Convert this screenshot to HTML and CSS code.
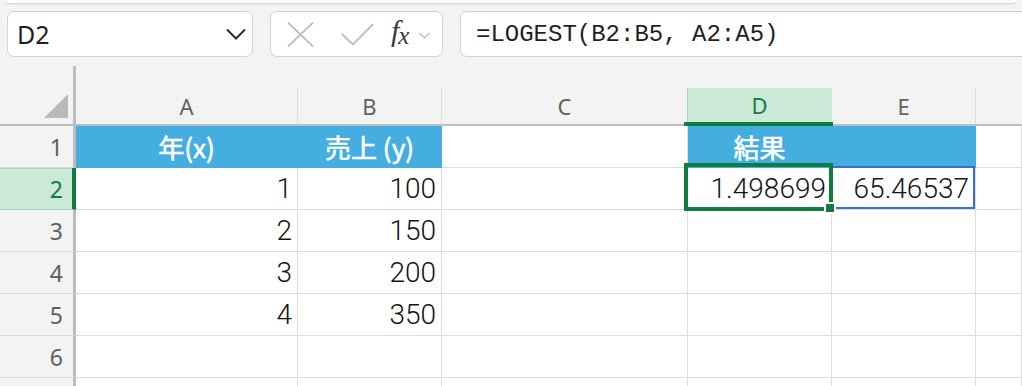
FILE: index.html
```html
<!DOCTYPE html>
<html lang="ja">

<head>
    <meta charset="UTF-8">
    <title>LOGEST</title>
    <link rel="stylesheet" href="styles.css">
</head>

<body>
    <div class="ribbon-edge"></div>

    <div class="formula-bar">
        <div class="name-box">
            <span class="name-text">D2</span>
            <svg class="name-caret" width="20" height="12" viewBox="0 0 20 12">
                <polyline points="1,1.5 10,10.5 19,1.5" fill="none" stroke="#2b2b2b" stroke-width="2" />
            </svg>
        </div>
        <div class="fx-box">
            <svg class="fx-cancel" width="27" height="25" viewBox="0 0 27 25">
                <path d="M1 0.5 L26 24.5 M26 0.5 L1 24.5" stroke="#bdbdbd" stroke-width="1.8" fill="none" />
            </svg>
            <svg class="fx-enter" width="33" height="23" viewBox="0 0 33 23">
                <polyline points="0.8,11 12,21.5 32.2,1" fill="none" stroke="#bdbdbd" stroke-width="1.8" />
            </svg>
            <span class="fx-label">f<span class="fx-x">x</span></span>
            <svg class="fx-caret" width="11" height="7" viewBox="0 0 11 7">
                <polyline points="0.5,1 5.5,6 10.5,1" fill="none" stroke="#b8b8b8" stroke-width="1.2" />
            </svg>
        </div>
        <div class="formula-input">=LOGEST(B2:B5, A2:A5)</div>
    </div>

    <div class="sheet">
        <!-- column headers -->
        <div class="corner">
            <svg width="24" height="24" viewBox="0 0 24 24">
                <polygon points="24,0 24,24 0,24" fill="#b9b9b9" />
            </svg>
        </div>
        <div class="ch">A</div>
        <div class="ch">B</div>
        <div class="ch">C</div>
        <div class="ch ch-active">D</div>
        <div class="ch">E</div>
        <div class="ch ch-last"></div>

        <!-- row 1 -->
        <div class="rh">1</div>
        <div class="c head">年(x)</div>
        <div class="c head">売上 (y)</div>
        <div class="c"></div>
        <div class="c head">結果</div>
        <div class="c head"></div>
        <div class="c"></div>

        <!-- row 2 -->
        <div class="rh rh-active">2</div>
        <div class="c num">1</div>
        <div class="c num">100</div>
        <div class="c"></div>
        <div class="c num selected">1.498699<span class="fill-handle"></span></div>
        <div class="c num spill">65.46537</div>
        <div class="c"></div>

        <!-- row 3 -->
        <div class="rh">3</div>
        <div class="c num">2</div>
        <div class="c num">150</div>
        <div class="c"></div>
        <div class="c"></div>
        <div class="c"></div>
        <div class="c"></div>

        <!-- row 4 -->
        <div class="rh">4</div>
        <div class="c num">3</div>
        <div class="c num">200</div>
        <div class="c"></div>
        <div class="c"></div>
        <div class="c"></div>
        <div class="c"></div>

        <!-- row 5 -->
        <div class="rh">5</div>
        <div class="c num">4</div>
        <div class="c num">350</div>
        <div class="c"></div>
        <div class="c"></div>
        <div class="c"></div>
        <div class="c"></div>

        <!-- row 6 -->
        <div class="rh">6</div>
        <div class="c"></div>
        <div class="c"></div>
        <div class="c"></div>
        <div class="c"></div>
        <div class="c"></div>
        <div class="c"></div>

        <!-- row 7, only its top edge is on screen -->
        <div class="rh"></div>
        <div class="c"></div>
        <div class="c"></div>
        <div class="c"></div>
        <div class="c"></div>
        <div class="c"></div>
        <div class="c"></div>
    </div>
</body>

</html>
```

FILE: styles.css
```css
body {
    margin: 0;
    background-color: #f3f3f3;
    font-family: "Noto Sans", "Noto Sans CJK JP", sans-serif;
    overflow: hidden;
}

.ribbon-edge {
    height: 3px;
    margin: 0 6px;
    background-color: #fff;
    border-radius: 0 0 8px 8px;
    box-shadow: 0 1px 2px rgba(0, 0, 0, 0.15);
}

/* formula bar */

.formula-bar {
    display: flex;
    gap: 17px;
    padding: 8px 0 0 7px;
    margin-right: -30px;
}

.name-box,
.fx-box,
.formula-input {
    box-sizing: border-box;
    height: 46px;
    background-color: #fff;
    border: 1px solid #d2d2d2;
    border-radius: 7px;
    display: flex;
    align-items: center;
}

.name-box {
    width: 246px;
    padding: 0 6px 0 9px;
    justify-content: space-between;
}

.name-text {
    font-size: 25px;
    color: #1f1f1f;
}

.fx-box {
    width: 173px;
    padding-left: 16px;
}

.fx-enter {
    margin-left: 27px;
}

.fx-label {
    margin-left: 17px;
    font-family: "Liberation Serif", serif;
    font-style: italic;
    font-size: 30px;
    color: #3a3a3a;
    line-height: 1;
    margin-top: -6px;
}

.fx-x {
    font-size: 25px;
    position: relative;
    top: 3px;
    margin-left: -1px;
}

.fx-caret {
    margin-left: 10px;
    margin-top: 2px;
}

.formula-input {
    flex: 1;
    padding-left: 15px;
    font-family: "Liberation Mono", monospace;
    font-size: 24px;
    color: #1f1f1f;
}

/* sheet grid */

.sheet {
    margin-top: 9px;
    display: grid;
    grid-template-columns: 76px 222px 144px 246px 144px 144px 1fr;
    grid-template-rows: 60px repeat(7, 42px);
}

.sheet > div {
    box-sizing: border-box;
}

.corner {
    border-right: 3px solid #bdbdbd;
    border-bottom: 2px solid #bdbdbd;
    display: flex;
    justify-content: flex-end;
    align-items: flex-end;
    padding: 0 5px 6px 0;
}

.ch {
    align-self: end;
    height: 38px;
    border-right: 1px solid #dcdcdc;
    border-bottom: 2px solid #bdbdbd;
    display: flex;
    justify-content: center;
    align-items: center;
    font-size: 22px;
    color: #616161;
}

.ch-active {
    background-color: #cae9d6;
    color: #107c41;
    border-left: 1px solid #a8d7ba;
    margin-left: -1px;
    border-right-color: #cae9d6;
    border-bottom: 4px solid #107c41;
    position: relative;
}

.ch-active::after {
    content: "";
    position: absolute;
    left: -4px;
    right: -2px;
    bottom: -4px;
    height: 4px;
    background-color: #107c41;
}

.ch-last {
    border-right: none;
}

.rh {
    background-color: #f3f3f3;
    border-right: 3px solid #bdbdbd;
    border-bottom: 1px solid #dcdcdc;
    display: flex;
    justify-content: flex-end;
    align-items: center;
    padding-right: 10px;
    font-size: 23px;
    color: #5f5f5f;
}

.rh-active {
    background-color: #cae9d6;
    border-right: 4px solid #107c41;
    border-bottom-color: #a8d7ba;
    box-shadow: inset 0 1px 0 #a8d7ba;
    padding-right: 9px;
    color: #107c41;
}

.c {
    background-color: #fff;
    border-right: 1px solid #dcdcdc;
    border-bottom: 1px solid #dcdcdc;
    display: flex;
    align-items: center;
    font-family: "Noto Sans CJK JP", sans-serif;
    font-size: 27px;
    color: #1a1a1a;
}

.head {
    background-color: #44aee1;
    border-color: #44aee1;
    justify-content: center;
    color: #fff;
    font-size: 26px;
    -webkit-text-stroke: 0.6px #fff;
}

.num {
    justify-content: flex-end;
    padding-right: 5px;
    font-family: Roboto, "Noto Sans CJK JP", sans-serif;
    font-weight: 300;
    font-size: 28px;
    color: #141414;
}

.selected {
    position: relative;
}

.selected::before {
    content: "";
    position: absolute;
    left: -4px;
    top: -5px;
    right: -2px;
    bottom: -2px;
    border: 4px solid #107c41;
    z-index: 2;
}

.fill-handle {
    position: absolute;
    right: -5px;
    bottom: -5px;
    width: 8px;
    height: 8px;
    background-color: #107c41;
    border: 2px solid #fff;
    z-index: 3;
}

.spill {
    position: relative;
    padding-right: 6px;
}

.spill::before {
    content: "";
    position: absolute;
    left: -1px;
    top: -2px;
    right: 0;
    bottom: 0;
    border: 2px solid #3a6fd1;
    z-index: 1;
}
```
